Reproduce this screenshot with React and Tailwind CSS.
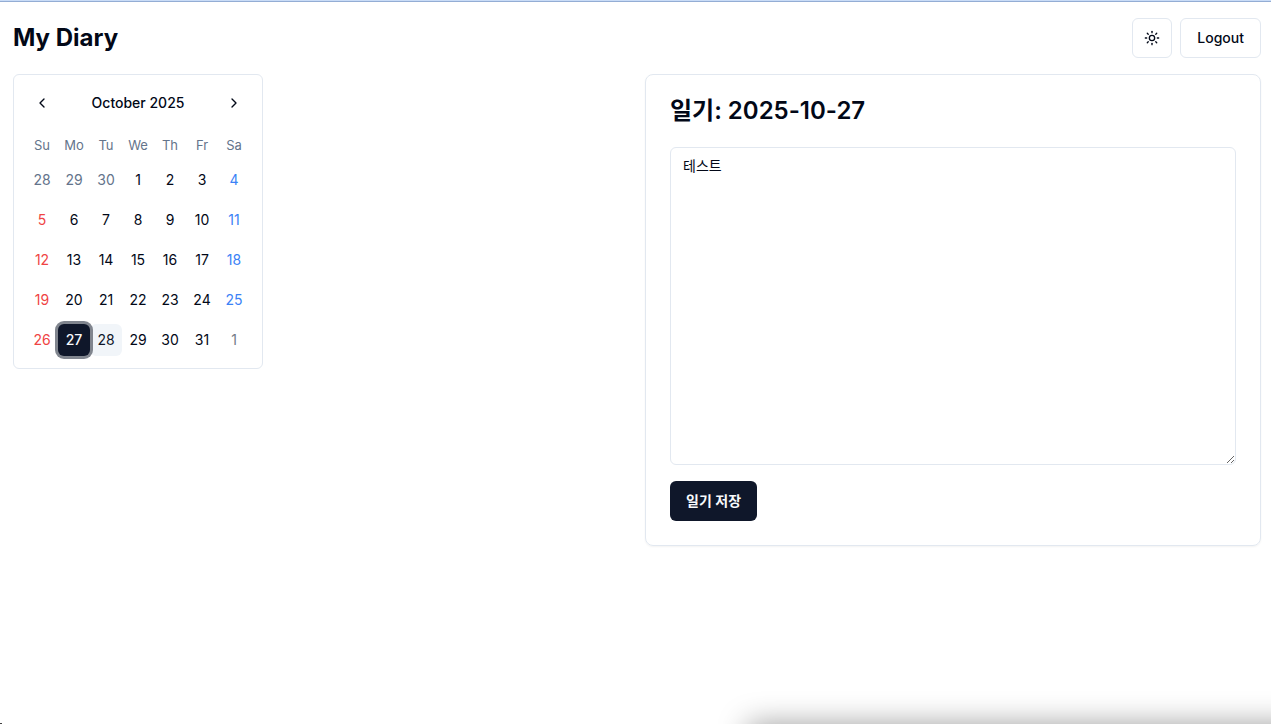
import { useState } from "react";
import { ChevronLeft, ChevronRight, Sun } from "lucide-react";

const WEEKDAYS = ["Su", "Mo", "Tu", "We", "Th", "Fr", "Sa"];
const WEEKS = [
  [28, 29, 30, 1, 2, 3, 4],
  [5, 6, 7, 8, 9, 10, 11],
  [12, 13, 14, 15, 16, 17, 18],
  [19, 20, 21, 22, 23, 24, 25],
  [26, 27, 28, 29, 30, 31, 1],
];

function dayClass(day, week, weekday, selected) {
  if (week === 4 && day === selected)
    return "z-10 bg-[#0f172a] font-medium text-[#f8fafc] ring-3 ring-[#80858e]";
  if (week === 4 && day === 28) return "bg-[#f1f5f9] text-[#0f172a]";
  if (week === 4 && day === 1) return "text-[#737b86]";
  if (week === 0 && day > 7) return "text-[#64748b]";
  if (weekday === 0) return "text-[#ef4444]";
  if (weekday === 6) return "text-[#3b82f6]";
  return "text-[#020817]";
}

function Calendar() {
  return (
    <section className="w-fit rounded-md border border-[#e2e8f0] p-3">
      <div className="flex items-center justify-between pt-1">
        <button type="button" aria-label="Previous month" className="flex h-6 w-8 items-center justify-center">
          <ChevronLeft className="size-4" />
        </button>
        <h2 className="text-sm font-medium">October 2025</h2>
        <button type="button" aria-label="Next month" className="flex h-6 w-8 items-center justify-center">
          <ChevronRight className="size-4" />
        </button>
      </div>
      <table className="mt-5 w-56 table-fixed border-collapse">
        <thead>
          <tr>
            {WEEKDAYS.map((name) => (
              <th key={name} scope="col" className="p-0 text-[13px] leading-[21px] font-normal text-[#64748b]">
                {name}
              </th>
            ))}
          </tr>
        </thead>
        <tbody>
          {WEEKS.map((days, week) => (
            <tr key={week}>
              {days.map((day, weekday) => (
                <td key={weekday} className="p-0 pt-2">
                  <button
                    type="button"
                    className={"relative flex size-8 items-center justify-center rounded-md text-sm " + dayClass(day, week, weekday, 27)}
                  >
                    {day}
                  </button>
                </td>
              ))}
            </tr>
          ))}
        </tbody>
      </table>
    </section>
  );
}

export default function App() {
  const [entry, setEntry] = useState("테스트");
  return (
    <div className="relative min-h-screen overflow-hidden bg-white font-['Inter','Noto_Sans_CJK_KR',sans-serif] text-[#020817]">
      <div className="h-0.5 border-b border-[#94add4] bg-[#c9dcf7]" />
      <div className="pt-4 pr-2.5 pl-[13px]">
        <header className="flex items-center justify-between">
          <h1 className="text-2xl font-bold">My Diary</h1>
          <div className="flex gap-2">
            <button type="button" aria-label="Toggle theme" className="flex size-10 items-center justify-center rounded-md border border-[#e2e8f0]">
              <Sun className="size-4" />
            </button>
            <button type="button" className="h-10 rounded-md border border-[#e2e8f0] px-4 text-sm font-medium">
              Logout
            </button>
          </div>
        </header>
        <main className="mt-4 grid grid-cols-2 items-start gap-4">
          <Calendar />
          <section className="rounded-lg border border-[#e2e8f0] p-6 shadow-xs">
            <h2 className="text-2xl leading-6 font-semibold">
              <label htmlFor="entry">일기: 2025-10-27</label>
            </h2>
            <textarea
              id="entry"
              value={entry}
              onChange={(e) => setEntry(e.target.value)}
              className="mt-6 block h-[318px] w-full rounded-md border border-[#e2e8f0] px-3 py-2 text-sm"
            />
            <button type="button" className="mt-4 h-10 rounded-md bg-[#0f172a] px-4 text-sm font-semibold text-[#f8fafc]">
              일기 저장
            </button>
          </section>
        </main>
      </div>
      <div className="pointer-events-none absolute -right-10 -bottom-10 left-[748px] h-10 shadow-[0_0_30px_rgba(0,0,0,0.38)]" />
      <div className="pointer-events-none absolute bottom-0 left-0 h-px w-0.5 bg-[#404040]" />
    </div>
  );
}
